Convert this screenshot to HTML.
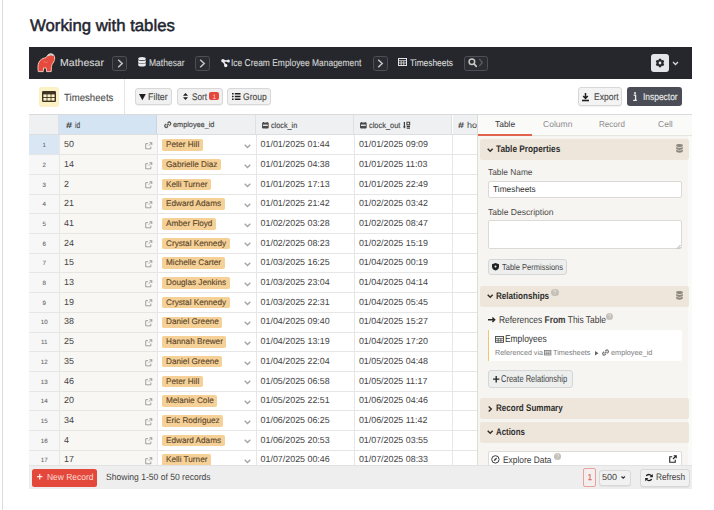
<!DOCTYPE html>
<html><head><meta charset="utf-8">
<style>
*{margin:0;padding:0;box-sizing:border-box}
html,body{width:714px;height:510px;overflow:hidden;background:#fff}
body{font-family:"Liberation Sans",sans-serif;position:relative;text-rendering:geometricPrecision}
.a{position:absolute}
.t{position:absolute;white-space:nowrap}
svg.a{overflow:visible}
</style></head><body>
<div class="a" style="left:2.00px;top:0.00px;width:1.00px;height:510.00px;background:#dcdcdc"></div>
<div class="t" style="left:29.60px;top:16px;font-size:16.7px;line-height:20px;color:#1f2530;-webkit-text-stroke:0.5px #1f2530;transform:scaleX(1.003);transform-origin:0 0;">Working with tables</div>
<div class="a" style="left:29.00px;top:47.00px;width:663.00px;height:31.50px;background:#25272c"></div>
<svg class="a" style="left:34.00px;top:51.00px;" width="24" height="24" viewBox="0 0 24 24"><path d="M4.3 20.6C3.9 18 3.8 15.4 4.3 13.2C4.9 10.5 6.6 8.4 9 7.5C10.3 7 11.6 6.8 12.6 6.2C13.1 4.5 14.5 3 16.6 2.9C19 2.8 20.7 4.6 20.7 7C20.7 9 20 10.6 19 12C18.2 13.1 17.6 14.2 17.4 15.6L17.2 20.6L12.6 20.6L12.2 16.9C11.4 17.1 10.4 17.1 9.6 16.9L9.2 20.6Z" fill="#e54b3c" stroke="#f2c4bb" stroke-width="1" stroke-linejoin="round"/><path d="M14.6 4.2C15.6 3.4 17.6 3.2 18.8 4" stroke="#d6d2cc" stroke-width="1.8" fill="none" stroke-linecap="round"/><path d="M9.5 10.2C10.8 11.4 12.2 11.6 13.6 11.2" stroke="#f38d7f" stroke-width="0.7" fill="none"/></svg>
<div class="t" style="left:59.80px;top:54px;font-size:10.2px;line-height:20px;color:#d9d9d9;-webkit-text-stroke:0.1px #d9d9d9;transform:scaleX(1.034);transform-origin:0 0;">Mathesar</div>
<div class="a" style="left:112.30px;top:56.20px;width:14.70px;height:14.50px;background:#2a2c31;border:1px solid #4c4f56;border-radius:2.5px"></div>
<svg class="a" style="left:116.50px;top:58.60px;" width="7" height="9" viewBox="0 0 7 9"><path d="M1.2 0.8l4 3.7-4 3.7" fill="none" stroke="#c4c4c4" stroke-width="1.5"/></svg>
<svg class="a" style="left:137.80px;top:57.40px;" width="8" height="9.6" viewBox="0 0 8 9.6"><ellipse cx="4" cy="1.7" rx="3.8" ry="1.6" fill="#ececec"/><path d="M0.2 2.9v2c0 .9 1.7 1.6 3.8 1.6s3.8-.7 3.8-1.6v-2c-.8.7-2.2 1.1-3.8 1.1S1 3.6.2 2.9zM0.2 5.9v2c0 .9 1.7 1.6 3.8 1.6s3.8-.7 3.8-1.6v-2c-.8.7-2.2 1.1-3.8 1.1S1 6.6.2 5.9z" fill="#ececec"/></svg>
<div class="t" style="left:148.50px;top:54px;font-size:9.9px;line-height:20px;color:#d9d9d9;-webkit-text-stroke:0.1px #d9d9d9;transform:scaleX(0.862);transform-origin:0 0;">Mathesar</div>
<div class="a" style="left:195.20px;top:56.20px;width:14.70px;height:14.50px;background:#2a2c31;border:1px solid #4c4f56;border-radius:2.5px"></div>
<svg class="a" style="left:199.40px;top:58.60px;" width="7" height="9" viewBox="0 0 7 9"><path d="M1.2 0.8l4 3.7-4 3.7" fill="none" stroke="#c4c4c4" stroke-width="1.5"/></svg>
<svg class="a" style="left:220.60px;top:58.50px;" width="9" height="8.5" viewBox="0 0 9 8.5"><path d="M2 1.8L7.3 2M2 1.8L4.6 6.4" stroke="#ececec" stroke-width="1.5"/><circle cx="2" cy="1.8" r="1.8" fill="#ececec"/><circle cx="7.4" cy="2" r="1.5" fill="#ececec"/><circle cx="4.7" cy="6.5" r="1.7" fill="#ececec"/></svg>
<div class="t" style="left:230.80px;top:54px;font-size:9.9px;line-height:20px;color:#d9d9d9;-webkit-text-stroke:0.1px #d9d9d9;transform:scaleX(0.854);transform-origin:0 0;">Ice Cream Employee Management</div>
<div class="a" style="left:373.20px;top:56.20px;width:14.70px;height:14.50px;background:#2a2c31;border:1px solid #4c4f56;border-radius:2.5px"></div>
<svg class="a" style="left:377.40px;top:58.60px;" width="7" height="9" viewBox="0 0 7 9"><path d="M1.2 0.8l4 3.7-4 3.7" fill="none" stroke="#c4c4c4" stroke-width="1.5"/></svg>
<svg class="a" style="left:397.80px;top:58.20px;" width="9" height="8" viewBox="0 0 9 8"><rect x="0.5" y="0.5" width="8" height="7" fill="none" stroke="#e4e4e4" stroke-width="1"/><path d="M0.5 2.7h8M0.5 5h8M3.2 2.7v4.8M5.8 2.7v4.8" stroke="#e4e4e4" stroke-width="0.8"/></svg>
<div class="t" style="left:410.10px;top:54px;font-size:9.5px;line-height:20px;color:#dcdcdc;-webkit-text-stroke:0.1px #dcdcdc;transform:scaleX(0.880);transform-origin:0 0;">Timesheets</div>
<div class="a" style="left:464.20px;top:56.00px;width:23.60px;height:14.50px;background:#2a2c31;border:1px solid #4c4f56;border-radius:2.5px"></div>
<svg class="a" style="left:467.60px;top:58.40px;" width="18" height="9" viewBox="0 0 18 9"><circle cx="3.9" cy="3.7" r="2.8" fill="none" stroke="#c8c8c8" stroke-width="1.5"/><path d="M5.9 5.8l2.4 2.5" stroke="#c8c8c8" stroke-width="1.7" stroke-linecap="round"/><path d="M11.2 0.9l3.2 3.6-3.2 3.6" fill="none" stroke="#5a5d63" stroke-width="1.3"/></svg>
<div class="a" style="left:651.30px;top:54.40px;width:17.30px;height:17.40px;background:#e4e5e8;border-radius:3px"></div>
<svg class="a" style="left:655.20px;top:58.20px;" width="10" height="10" viewBox="0 0 10 10"><path d="M3.40 2.23 L4.01 0.71 L5.99 0.71 L6.60 2.23 L8.22 2.00 L9.21 3.71 L8.20 5.00 L9.21 6.29 L8.22 8.00 L6.60 7.77 L5.99 9.29 L4.01 9.29 L3.40 7.77 L1.78 8.00 L0.79 6.29 L1.80 5.00 L0.79 3.71 L1.78 2.00Z" fill="#25262a"/><circle cx="5" cy="5" r="1.4" fill="#e6e6e8"/></svg>
<svg class="a" style="left:672.00px;top:61.00px;" width="7" height="5" viewBox="0 0 7 5"><path d="M1 1l2.5 2.5L6 1" fill="none" stroke="#d8d8d8" stroke-width="1.3"/></svg>
<div class="a" style="left:29.00px;top:78.50px;width:663.00px;height:35.50px;background:#fff"></div>
<div class="a" style="left:38.90px;top:86.50px;width:20.30px;height:20.10px;background:#fcf0c5;border-radius:3px"></div>
<svg class="a" style="left:41.70px;top:91.20px;" width="14" height="11" viewBox="0 0 14 11"><rect x="0" y="0" width="14" height="11" rx="1.2" fill="#3e3424"/><rect x="1.4" y="3.4" width="3.2" height="2.6" fill="#fcf0c5"/><rect x="5.4" y="3.4" width="3.2" height="2.6" fill="#fcf0c5"/><rect x="9.4" y="3.4" width="3.2" height="2.6" fill="#fcf0c5"/><rect x="1.4" y="6.9" width="3.2" height="2.7" fill="#fcf0c5"/><rect x="5.4" y="6.9" width="3.2" height="2.7" fill="#fcf0c5"/><rect x="9.4" y="6.9" width="3.2" height="2.7" fill="#fcf0c5"/></svg>
<div class="t" style="left:64.40px;top:89px;font-size:10.3px;line-height:20px;color:#4a4a4a;-webkit-text-stroke:0.1px #4a4a4a;transform:scaleX(0.935);transform-origin:0 0;">Timesheets</div>
<div class="a" style="left:124.10px;top:79.00px;width:1.00px;height:35.00px;background:#e4e4e4"></div>
<div class="a" style="left:134.60px;top:87.50px;width:37.80px;height:17.80px;background:#f1f1f1;border:1px solid #d8d8d8;border-radius:3px;box-shadow:0 1px 0 rgba(0,0,0,.05)"></div>
<svg class="a" style="left:138.80px;top:94.00px;" width="6.8" height="6.2" viewBox="0 0 6.8 6.2"><path d="M0 0h6.8L3.4 6.2z" fill="#1e1e1e"/></svg>
<div class="t" style="left:148.00px;top:88px;font-size:9.7px;line-height:20px;color:#4a4a4a;-webkit-text-stroke:0.12px #4a4a4a;transform:scaleX(0.919);transform-origin:0 0;">Filter</div>
<div class="a" style="left:177.10px;top:87.50px;width:45.50px;height:17.80px;background:#f1f1f1;border:1px solid #d8d8d8;border-radius:3px;box-shadow:0 1px 0 rgba(0,0,0,.05)"></div>
<svg class="a" style="left:182.70px;top:93.30px;" width="5" height="7" viewBox="0 0 5 7"><path d="M2.5 0L5 2.8H0zM2.5 7L5 4.2H0z" fill="#1e1e1e"/></svg>
<div class="t" style="left:192.10px;top:88px;font-size:9.7px;line-height:20px;color:#4a4a4a;-webkit-text-stroke:0.12px #4a4a4a;transform:scaleX(0.848);transform-origin:0 0;">Sort</div>
<div class="a" style="left:209.30px;top:91.70px;width:9.40px;height:8.70px;background:#e5483b;border-radius:2px"></div>
<div class="t" style="left:212.40px;top:88px;font-size:6.5px;line-height:20px;color:#ffd9d4;">1</div>
<div class="a" style="left:227.10px;top:87.50px;width:43.90px;height:17.80px;background:#f1f1f1;border:1px solid #d8d8d8;border-radius:3px;box-shadow:0 1px 0 rgba(0,0,0,.05)"></div>
<svg class="a" style="left:231.70px;top:93.10px;" width="8.5" height="7" viewBox="0 0 8.5 7"><path d="M0 0.8h1.6M0 3.5h1.6M0 6.2h1.6M2.8 0.8h5.7M2.8 3.5h5.7M2.8 6.2h5.7" stroke="#1e1e1e" stroke-width="1.4"/></svg>
<div class="t" style="left:242.90px;top:88px;font-size:9.7px;line-height:20px;color:#4a4a4a;-webkit-text-stroke:0.12px #4a4a4a;transform:scaleX(0.883);transform-origin:0 0;">Group</div>
<div class="a" style="left:578.10px;top:87.30px;width:43.90px;height:18.50px;background:#f3f3f3;border:1px solid #d8d8d8;border-radius:3px;box-shadow:0 1px 0 rgba(0,0,0,.05)"></div>
<svg class="a" style="left:582.40px;top:92.70px;" width="7" height="8.5" viewBox="0 0 7 8.5"><path d="M3.5 0v5.2M1.2 3l2.3 2.4L5.8 3" fill="none" stroke="#1e1e1e" stroke-width="1.5"/><path d="M0 7.5h7" stroke="#1e1e1e" stroke-width="1.6"/></svg>
<div class="t" style="left:593.50px;top:88px;font-size:9.7px;line-height:20px;color:#4a4a4a;-webkit-text-stroke:0.12px #4a4a4a;transform:scaleX(0.878);transform-origin:0 0;">Export</div>
<div class="a" style="left:626.60px;top:87.30px;width:55.50px;height:18.50px;background:#4a4d55;border-radius:3px"></div>
<svg class="a" style="left:633.00px;top:92.30px;" width="4" height="9" viewBox="0 0 4 9"><circle cx="2" cy="1" r="1" fill="#f0f0f0"/><path d="M0.6 3.2h2v5M0.2 8.3h3.6" fill="none" stroke="#f0f0f0" stroke-width="1.3"/></svg>
<div class="t" style="left:642.80px;top:88px;font-size:9.7px;line-height:20px;color:#eeeeee;-webkit-text-stroke:0.12px #eeeeee;transform:scaleX(0.869);transform-origin:0 0;">Inspector</div>
<div class="a" style="left:29.00px;top:115.00px;width:448.50px;height:350.00px;background:#fff"></div>
<div class="a" style="left:29.00px;top:115.00px;width:30.00px;height:20.00px;background:#eef0f1;border-right:1px solid #dfe0e1"></div>
<div class="a" style="left:59.00px;top:115.00px;width:98.00px;height:20.00px;background:#d4e4f2;border-right:1px solid #c9d6e2"></div>
<div class="a" style="left:157.00px;top:115.00px;width:99.00px;height:20.00px;background:#eef0f1;border-right:1px solid #dfe0e1"></div>
<div class="a" style="left:256.00px;top:115.00px;width:98.30px;height:20.00px;background:#eef0f1;border-right:1px solid #dfe0e1"></div>
<div class="a" style="left:354.30px;top:115.00px;width:98.20px;height:20.00px;background:#eef0f1;border-right:1px solid #dfe0e1"></div>
<div class="a" style="left:452.50px;top:115.00px;width:25.00px;height:20.00px;background:#eef0f1"></div>
<div class="a" style="left:29.00px;top:134.30px;width:448.50px;height:0.90px;background:#dcdedf"></div>
<div class="t" style="left:65.50px;top:115px;font-size:8.6px;line-height:20px;color:#474747;font-weight:bold;transform:scaleX(1.278);transform-origin:0 0;">#</div>
<div class="t" style="left:75.10px;top:115px;font-size:8.6px;line-height:20px;color:#474747;-webkit-text-stroke:0.15px #474747;transform:scaleX(0.760);transform-origin:0 0;">id</div>
<svg class="a" style="left:163.60px;top:122.10px;" width="7.5" height="5.5" viewBox="0 0 7.5 5.5"><path d="M3.4 1.2L4.1 0.6a1.5 1.5 0 0 1 2.3 2L5.3 3.6M4.1 4.3L3.4 4.9a1.5 1.5 0 0 1-2.3-2L2.2 1.9M2.7 3.6L4.8 1.9" fill="none" stroke="#555" stroke-width="1.25"/></svg>
<div class="t" style="left:172.60px;top:115px;font-size:7.6px;line-height:20px;color:#474747;-webkit-text-stroke:0.15px #474747;transform:scaleX(0.961);transform-origin:0 0;">employee_id</div>
<svg class="a" style="left:261.90px;top:121.60px;" width="6.7" height="6.4" viewBox="0 0 6.7 6.4"><rect x="0" y="0.6" width="6.7" height="5.8" rx="0.8" fill="#4a4a4a"/><rect x="1" y="0" width="1" height="1.2" fill="#4a4a4a"/><rect x="4.7" y="0" width="1" height="1.2" fill="#4a4a4a"/><rect x="0.9" y="2.6" width="4.9" height="1.3" fill="#eef0f1"/></svg>
<div class="t" style="left:271.00px;top:116px;font-size:8.0px;line-height:20px;color:#474747;-webkit-text-stroke:0.15px #474747;transform:scaleX(0.906);transform-origin:0 0;">clock_in</div>
<svg class="a" style="left:359.90px;top:121.60px;" width="6.7" height="6.4" viewBox="0 0 6.7 6.4"><rect x="0" y="0.6" width="6.7" height="5.8" rx="0.8" fill="#4a4a4a"/><rect x="1" y="0" width="1" height="1.2" fill="#4a4a4a"/><rect x="4.7" y="0" width="1" height="1.2" fill="#4a4a4a"/><rect x="0.9" y="2.6" width="4.9" height="1.3" fill="#eef0f1"/></svg>
<div class="t" style="left:368.70px;top:116px;font-size:8.0px;line-height:20px;color:#474747;-webkit-text-stroke:0.15px #474747;transform:scaleX(0.929);transform-origin:0 0;">clock_out</div>
<svg class="a" style="left:402.50px;top:121.60px;" width="7.2" height="6.6" viewBox="0 0 7.2 6.6"><path d="M1.4 0v5.6" stroke="#3e3e3e" stroke-width="1.2"/><path d="M0 4.4l1.4 2.2 1.4-2.2z" fill="#3e3e3e"/><rect x="3.9" y="0.2" width="2.8" height="2.6" fill="none" stroke="#3e3e3e" stroke-width="1"/><path d="M3.7 4.4h3.3M3.7 6.1h3.3" stroke="#3e3e3e" stroke-width="1.1"/></svg>
<div class="t" style="left:458.00px;top:115px;font-size:8.6px;line-height:20px;color:#474747;font-weight:bold;transform:scaleX(1.257);transform-origin:0 0;">#</div>
<div class="t" style="left:466.50px;top:115px;font-size:8.6px;line-height:20px;color:#474747;transform:scaleX(1.047);transform-origin:0 0;clip-path:inset(0 44% 0 0);">hours</div>
<div class="a" style="left:29.00px;top:135.10px;width:30.00px;height:329.90px;background:#f7f7f7"></div>
<div class="a" style="left:59.00px;top:135.10px;width:98.00px;height:329.90px;background:#f8f7f4"></div>
<div class="a" style="left:29.00px;top:135.10px;width:30.00px;height:19.70px;background:#d9e7f4"></div>
<div class="t" style="left:42.48px;top:136px;font-size:6.2px;line-height:20px;color:#6a6a6a;-webkit-text-stroke:0.1px #6a6a6a;">1</div>
<div class="t" style="left:64.00px;top:134px;font-size:8.9px;line-height:20px;color:#444;">50</div>
<svg class="a" style="left:145.00px;top:141.80px;" width="7.5" height="7.5" viewBox="0 0 16 16"><path d="M9.5 1.5h5v5M14.5 1.5L8 8M12.5 9.5v5h-11v-11h5" fill="none" stroke="#8c8c8c" stroke-width="1.7"/></svg>
<div class="a" style="left:162.20px;top:139.20px;width:40.55px;height:11.50px;background:#f6d197;border-radius:1.8px"></div>
<div class="t" style="left:166.00px;top:135px;font-size:8.2px;line-height:20px;color:#5a462b;-webkit-text-stroke:0.12px #5a462b;">Peter Hill</div>
<svg class="a" style="left:243.70px;top:143.80px;" width="7" height="4.5" viewBox="0 0 7 4.5"><path d="M0.7 0.7l2.8 2.8 2.8-2.8" fill="none" stroke="#a3a3a3" stroke-width="1.3"/></svg>
<div class="t" style="left:260.60px;top:134px;font-size:8.9px;line-height:20px;color:#444;">01/01/2025 01:44</div>
<div class="t" style="left:358.90px;top:134px;font-size:8.9px;line-height:20px;color:#444;">01/01/2025 09:09</div>
<div class="a" style="left:29.00px;top:154.20px;width:448.50px;height:1.10px;background:#e6e6e6"></div>
<div class="t" style="left:42.48px;top:156px;font-size:6.2px;line-height:20px;color:#6a6a6a;-webkit-text-stroke:0.1px #6a6a6a;">2</div>
<div class="t" style="left:64.00px;top:154px;font-size:8.9px;line-height:20px;color:#444;">14</div>
<svg class="a" style="left:145.00px;top:161.50px;" width="7.5" height="7.5" viewBox="0 0 16 16"><path d="M9.5 1.5h5v5M14.5 1.5L8 8M12.5 9.5v5h-11v-11h5" fill="none" stroke="#8c8c8c" stroke-width="1.7"/></svg>
<div class="a" style="left:162.20px;top:158.90px;width:58.80px;height:11.50px;background:#f6d197;border-radius:1.8px"></div>
<div class="t" style="left:166.00px;top:155px;font-size:8.2px;line-height:20px;color:#5a462b;-webkit-text-stroke:0.12px #5a462b;">Gabrielle Diaz</div>
<svg class="a" style="left:243.70px;top:163.50px;" width="7" height="4.5" viewBox="0 0 7 4.5"><path d="M0.7 0.7l2.8 2.8 2.8-2.8" fill="none" stroke="#a3a3a3" stroke-width="1.3"/></svg>
<div class="t" style="left:260.60px;top:154px;font-size:8.9px;line-height:20px;color:#444;">01/01/2025 04:38</div>
<div class="t" style="left:358.90px;top:154px;font-size:8.9px;line-height:20px;color:#444;">01/01/2025 11:03</div>
<div class="a" style="left:29.00px;top:173.90px;width:448.50px;height:1.10px;background:#e6e6e6"></div>
<div class="t" style="left:42.48px;top:176px;font-size:6.2px;line-height:20px;color:#6a6a6a;-webkit-text-stroke:0.1px #6a6a6a;">3</div>
<div class="t" style="left:64.00px;top:174px;font-size:8.9px;line-height:20px;color:#444;">2</div>
<svg class="a" style="left:145.00px;top:181.20px;" width="7.5" height="7.5" viewBox="0 0 16 16"><path d="M9.5 1.5h5v5M14.5 1.5L8 8M12.5 9.5v5h-11v-11h5" fill="none" stroke="#8c8c8c" stroke-width="1.7"/></svg>
<div class="a" style="left:162.20px;top:178.60px;width:48.79px;height:11.50px;background:#f6d197;border-radius:1.8px"></div>
<div class="t" style="left:166.00px;top:175px;font-size:8.2px;line-height:20px;color:#5a462b;-webkit-text-stroke:0.12px #5a462b;">Kelli Turner</div>
<svg class="a" style="left:243.70px;top:183.20px;" width="7" height="4.5" viewBox="0 0 7 4.5"><path d="M0.7 0.7l2.8 2.8 2.8-2.8" fill="none" stroke="#a3a3a3" stroke-width="1.3"/></svg>
<div class="t" style="left:260.60px;top:174px;font-size:8.9px;line-height:20px;color:#444;">01/01/2025 17:13</div>
<div class="t" style="left:358.90px;top:174px;font-size:8.9px;line-height:20px;color:#444;">01/01/2025 22:49</div>
<div class="a" style="left:29.00px;top:193.60px;width:448.50px;height:1.10px;background:#e6e6e6"></div>
<div class="t" style="left:42.48px;top:195px;font-size:6.2px;line-height:20px;color:#6a6a6a;-webkit-text-stroke:0.1px #6a6a6a;">4</div>
<div class="t" style="left:64.00px;top:193px;font-size:8.9px;line-height:20px;color:#444;">21</div>
<svg class="a" style="left:145.00px;top:200.90px;" width="7.5" height="7.5" viewBox="0 0 16 16"><path d="M9.5 1.5h5v5M14.5 1.5L8 8M12.5 9.5v5h-11v-11h5" fill="none" stroke="#8c8c8c" stroke-width="1.7"/></svg>
<div class="a" style="left:162.20px;top:198.30px;width:62.44px;height:11.50px;background:#f6d197;border-radius:1.8px"></div>
<div class="t" style="left:166.00px;top:194px;font-size:8.2px;line-height:20px;color:#5a462b;-webkit-text-stroke:0.12px #5a462b;">Edward Adams</div>
<svg class="a" style="left:243.70px;top:202.90px;" width="7" height="4.5" viewBox="0 0 7 4.5"><path d="M0.7 0.7l2.8 2.8 2.8-2.8" fill="none" stroke="#a3a3a3" stroke-width="1.3"/></svg>
<div class="t" style="left:260.60px;top:193px;font-size:8.9px;line-height:20px;color:#444;">01/01/2025 21:42</div>
<div class="t" style="left:358.90px;top:193px;font-size:8.9px;line-height:20px;color:#444;">01/02/2025 03:42</div>
<div class="a" style="left:29.00px;top:213.30px;width:448.50px;height:1.10px;background:#e6e6e6"></div>
<div class="t" style="left:42.48px;top:215px;font-size:6.2px;line-height:20px;color:#6a6a6a;-webkit-text-stroke:0.1px #6a6a6a;">5</div>
<div class="t" style="left:64.00px;top:213px;font-size:8.9px;line-height:20px;color:#444;">41</div>
<svg class="a" style="left:145.00px;top:220.60px;" width="7.5" height="7.5" viewBox="0 0 16 16"><path d="M9.5 1.5h5v5M14.5 1.5L8 8M12.5 9.5v5h-11v-11h5" fill="none" stroke="#8c8c8c" stroke-width="1.7"/></svg>
<div class="a" style="left:162.20px;top:218.00px;width:53.79px;height:11.50px;background:#f6d197;border-radius:1.8px"></div>
<div class="t" style="left:166.00px;top:214px;font-size:8.2px;line-height:20px;color:#5a462b;-webkit-text-stroke:0.12px #5a462b;">Amber Floyd</div>
<svg class="a" style="left:243.70px;top:222.60px;" width="7" height="4.5" viewBox="0 0 7 4.5"><path d="M0.7 0.7l2.8 2.8 2.8-2.8" fill="none" stroke="#a3a3a3" stroke-width="1.3"/></svg>
<div class="t" style="left:260.60px;top:213px;font-size:8.9px;line-height:20px;color:#444;">01/02/2025 03:28</div>
<div class="t" style="left:358.90px;top:213px;font-size:8.9px;line-height:20px;color:#444;">01/02/2025 08:47</div>
<div class="a" style="left:29.00px;top:233.00px;width:448.50px;height:1.10px;background:#e6e6e6"></div>
<div class="t" style="left:42.48px;top:235px;font-size:6.2px;line-height:20px;color:#6a6a6a;-webkit-text-stroke:0.1px #6a6a6a;">6</div>
<div class="t" style="left:64.00px;top:233px;font-size:8.9px;line-height:20px;color:#444;">24</div>
<svg class="a" style="left:145.00px;top:240.30px;" width="7.5" height="7.5" viewBox="0 0 16 16"><path d="M9.5 1.5h5v5M14.5 1.5L8 8M12.5 9.5v5h-11v-11h5" fill="none" stroke="#8c8c8c" stroke-width="1.7"/></svg>
<div class="a" style="left:162.20px;top:237.70px;width:67.45px;height:11.50px;background:#f6d197;border-radius:1.8px"></div>
<div class="t" style="left:166.00px;top:234px;font-size:8.2px;line-height:20px;color:#5a462b;-webkit-text-stroke:0.12px #5a462b;">Crystal Kennedy</div>
<svg class="a" style="left:243.70px;top:242.30px;" width="7" height="4.5" viewBox="0 0 7 4.5"><path d="M0.7 0.7l2.8 2.8 2.8-2.8" fill="none" stroke="#a3a3a3" stroke-width="1.3"/></svg>
<div class="t" style="left:260.60px;top:233px;font-size:8.9px;line-height:20px;color:#444;">01/02/2025 08:23</div>
<div class="t" style="left:358.90px;top:233px;font-size:8.9px;line-height:20px;color:#444;">01/02/2025 15:19</div>
<div class="a" style="left:29.00px;top:252.70px;width:448.50px;height:1.10px;background:#e6e6e6"></div>
<div class="t" style="left:42.48px;top:254px;font-size:6.2px;line-height:20px;color:#6a6a6a;-webkit-text-stroke:0.1px #6a6a6a;">7</div>
<div class="t" style="left:64.00px;top:252px;font-size:8.9px;line-height:20px;color:#444;">15</div>
<svg class="a" style="left:145.00px;top:260.00px;" width="7.5" height="7.5" viewBox="0 0 16 16"><path d="M9.5 1.5h5v5M14.5 1.5L8 8M12.5 9.5v5h-11v-11h5" fill="none" stroke="#8c8c8c" stroke-width="1.7"/></svg>
<div class="a" style="left:162.20px;top:257.40px;width:62.44px;height:11.50px;background:#f6d197;border-radius:1.8px"></div>
<div class="t" style="left:166.00px;top:253px;font-size:8.2px;line-height:20px;color:#5a462b;-webkit-text-stroke:0.12px #5a462b;">Michelle Carter</div>
<svg class="a" style="left:243.70px;top:262.00px;" width="7" height="4.5" viewBox="0 0 7 4.5"><path d="M0.7 0.7l2.8 2.8 2.8-2.8" fill="none" stroke="#a3a3a3" stroke-width="1.3"/></svg>
<div class="t" style="left:260.60px;top:252px;font-size:8.9px;line-height:20px;color:#444;">01/03/2025 16:25</div>
<div class="t" style="left:358.90px;top:252px;font-size:8.9px;line-height:20px;color:#444;">01/04/2025 00:19</div>
<div class="a" style="left:29.00px;top:272.40px;width:448.50px;height:1.10px;background:#e6e6e6"></div>
<div class="t" style="left:42.48px;top:274px;font-size:6.2px;line-height:20px;color:#6a6a6a;-webkit-text-stroke:0.1px #6a6a6a;">8</div>
<div class="t" style="left:64.00px;top:272px;font-size:8.9px;line-height:20px;color:#444;">13</div>
<svg class="a" style="left:145.00px;top:279.70px;" width="7.5" height="7.5" viewBox="0 0 16 16"><path d="M9.5 1.5h5v5M14.5 1.5L8 8M12.5 9.5v5h-11v-11h5" fill="none" stroke="#8c8c8c" stroke-width="1.7"/></svg>
<div class="a" style="left:162.20px;top:277.10px;width:67.49px;height:11.50px;background:#f6d197;border-radius:1.8px"></div>
<div class="t" style="left:166.00px;top:273px;font-size:8.2px;line-height:20px;color:#5a462b;-webkit-text-stroke:0.12px #5a462b;">Douglas Jenkins</div>
<svg class="a" style="left:243.70px;top:281.70px;" width="7" height="4.5" viewBox="0 0 7 4.5"><path d="M0.7 0.7l2.8 2.8 2.8-2.8" fill="none" stroke="#a3a3a3" stroke-width="1.3"/></svg>
<div class="t" style="left:260.60px;top:272px;font-size:8.9px;line-height:20px;color:#444;">01/03/2025 23:04</div>
<div class="t" style="left:358.90px;top:272px;font-size:8.9px;line-height:20px;color:#444;">01/04/2025 04:14</div>
<div class="a" style="left:29.00px;top:292.10px;width:448.50px;height:1.10px;background:#e6e6e6"></div>
<div class="t" style="left:42.48px;top:294px;font-size:6.2px;line-height:20px;color:#6a6a6a;-webkit-text-stroke:0.1px #6a6a6a;">9</div>
<div class="t" style="left:64.00px;top:292px;font-size:8.9px;line-height:20px;color:#444;">19</div>
<svg class="a" style="left:145.00px;top:299.40px;" width="7.5" height="7.5" viewBox="0 0 16 16"><path d="M9.5 1.5h5v5M14.5 1.5L8 8M12.5 9.5v5h-11v-11h5" fill="none" stroke="#8c8c8c" stroke-width="1.7"/></svg>
<div class="a" style="left:162.20px;top:296.80px;width:67.45px;height:11.50px;background:#f6d197;border-radius:1.8px"></div>
<div class="t" style="left:166.00px;top:293px;font-size:8.2px;line-height:20px;color:#5a462b;-webkit-text-stroke:0.12px #5a462b;">Crystal Kennedy</div>
<svg class="a" style="left:243.70px;top:301.40px;" width="7" height="4.5" viewBox="0 0 7 4.5"><path d="M0.7 0.7l2.8 2.8 2.8-2.8" fill="none" stroke="#a3a3a3" stroke-width="1.3"/></svg>
<div class="t" style="left:260.60px;top:292px;font-size:8.9px;line-height:20px;color:#444;">01/03/2025 22:31</div>
<div class="t" style="left:358.90px;top:292px;font-size:8.9px;line-height:20px;color:#444;">01/04/2025 05:45</div>
<div class="a" style="left:29.00px;top:311.80px;width:448.50px;height:1.10px;background:#e6e6e6"></div>
<div class="t" style="left:40.76px;top:313px;font-size:6.2px;line-height:20px;color:#6a6a6a;-webkit-text-stroke:0.1px #6a6a6a;">10</div>
<div class="t" style="left:64.00px;top:311px;font-size:8.9px;line-height:20px;color:#444;">38</div>
<svg class="a" style="left:145.00px;top:319.10px;" width="7.5" height="7.5" viewBox="0 0 16 16"><path d="M9.5 1.5h5v5M14.5 1.5L8 8M12.5 9.5v5h-11v-11h5" fill="none" stroke="#8c8c8c" stroke-width="1.7"/></svg>
<div class="a" style="left:162.20px;top:316.50px;width:60.19px;height:11.50px;background:#f6d197;border-radius:1.8px"></div>
<div class="t" style="left:166.00px;top:312px;font-size:8.2px;line-height:20px;color:#5a462b;-webkit-text-stroke:0.12px #5a462b;">Daniel Greene</div>
<svg class="a" style="left:243.70px;top:321.10px;" width="7" height="4.5" viewBox="0 0 7 4.5"><path d="M0.7 0.7l2.8 2.8 2.8-2.8" fill="none" stroke="#a3a3a3" stroke-width="1.3"/></svg>
<div class="t" style="left:260.60px;top:311px;font-size:8.9px;line-height:20px;color:#444;">01/04/2025 09:40</div>
<div class="t" style="left:358.90px;top:311px;font-size:8.9px;line-height:20px;color:#444;">01/04/2025 15:27</div>
<div class="a" style="left:29.00px;top:331.50px;width:448.50px;height:1.10px;background:#e6e6e6"></div>
<div class="t" style="left:40.98px;top:333px;font-size:6.2px;line-height:20px;color:#6a6a6a;-webkit-text-stroke:0.1px #6a6a6a;">11</div>
<div class="t" style="left:64.00px;top:331px;font-size:8.9px;line-height:20px;color:#444;">25</div>
<svg class="a" style="left:145.00px;top:338.80px;" width="7.5" height="7.5" viewBox="0 0 16 16"><path d="M9.5 1.5h5v5M14.5 1.5L8 8M12.5 9.5v5h-11v-11h5" fill="none" stroke="#8c8c8c" stroke-width="1.7"/></svg>
<div class="a" style="left:162.20px;top:336.20px;width:64.29px;height:11.50px;background:#f6d197;border-radius:1.8px"></div>
<div class="t" style="left:166.00px;top:332px;font-size:8.2px;line-height:20px;color:#5a462b;-webkit-text-stroke:0.12px #5a462b;">Hannah Brewer</div>
<svg class="a" style="left:243.70px;top:340.80px;" width="7" height="4.5" viewBox="0 0 7 4.5"><path d="M0.7 0.7l2.8 2.8 2.8-2.8" fill="none" stroke="#a3a3a3" stroke-width="1.3"/></svg>
<div class="t" style="left:260.60px;top:331px;font-size:8.9px;line-height:20px;color:#444;">01/04/2025 13:19</div>
<div class="t" style="left:358.90px;top:331px;font-size:8.9px;line-height:20px;color:#444;">01/04/2025 17:20</div>
<div class="a" style="left:29.00px;top:351.20px;width:448.50px;height:1.10px;background:#e6e6e6"></div>
<div class="t" style="left:40.76px;top:353px;font-size:6.2px;line-height:20px;color:#6a6a6a;-webkit-text-stroke:0.1px #6a6a6a;">12</div>
<div class="t" style="left:64.00px;top:351px;font-size:8.9px;line-height:20px;color:#444;">35</div>
<svg class="a" style="left:145.00px;top:358.50px;" width="7.5" height="7.5" viewBox="0 0 16 16"><path d="M9.5 1.5h5v5M14.5 1.5L8 8M12.5 9.5v5h-11v-11h5" fill="none" stroke="#8c8c8c" stroke-width="1.7"/></svg>
<div class="a" style="left:162.20px;top:355.90px;width:60.19px;height:11.50px;background:#f6d197;border-radius:1.8px"></div>
<div class="t" style="left:166.00px;top:352px;font-size:8.2px;line-height:20px;color:#5a462b;-webkit-text-stroke:0.12px #5a462b;">Daniel Greene</div>
<svg class="a" style="left:243.70px;top:360.50px;" width="7" height="4.5" viewBox="0 0 7 4.5"><path d="M0.7 0.7l2.8 2.8 2.8-2.8" fill="none" stroke="#a3a3a3" stroke-width="1.3"/></svg>
<div class="t" style="left:260.60px;top:351px;font-size:8.9px;line-height:20px;color:#444;">01/04/2025 22:04</div>
<div class="t" style="left:358.90px;top:351px;font-size:8.9px;line-height:20px;color:#444;">01/05/2025 04:48</div>
<div class="a" style="left:29.00px;top:370.90px;width:448.50px;height:1.10px;background:#e6e6e6"></div>
<div class="t" style="left:40.76px;top:373px;font-size:6.2px;line-height:20px;color:#6a6a6a;-webkit-text-stroke:0.1px #6a6a6a;">13</div>
<div class="t" style="left:64.00px;top:371px;font-size:8.9px;line-height:20px;color:#444;">46</div>
<svg class="a" style="left:145.00px;top:378.20px;" width="7.5" height="7.5" viewBox="0 0 16 16"><path d="M9.5 1.5h5v5M14.5 1.5L8 8M12.5 9.5v5h-11v-11h5" fill="none" stroke="#8c8c8c" stroke-width="1.7"/></svg>
<div class="a" style="left:162.20px;top:375.60px;width:40.55px;height:11.50px;background:#f6d197;border-radius:1.8px"></div>
<div class="t" style="left:166.00px;top:372px;font-size:8.2px;line-height:20px;color:#5a462b;-webkit-text-stroke:0.12px #5a462b;">Peter Hill</div>
<svg class="a" style="left:243.70px;top:380.20px;" width="7" height="4.5" viewBox="0 0 7 4.5"><path d="M0.7 0.7l2.8 2.8 2.8-2.8" fill="none" stroke="#a3a3a3" stroke-width="1.3"/></svg>
<div class="t" style="left:260.60px;top:371px;font-size:8.9px;line-height:20px;color:#444;">01/05/2025 06:58</div>
<div class="t" style="left:358.90px;top:371px;font-size:8.9px;line-height:20px;color:#444;">01/05/2025 11:17</div>
<div class="a" style="left:29.00px;top:390.60px;width:448.50px;height:1.10px;background:#e6e6e6"></div>
<div class="t" style="left:40.76px;top:392px;font-size:6.2px;line-height:20px;color:#6a6a6a;-webkit-text-stroke:0.1px #6a6a6a;">14</div>
<div class="t" style="left:64.00px;top:390px;font-size:8.9px;line-height:20px;color:#444;">20</div>
<svg class="a" style="left:145.00px;top:397.90px;" width="7.5" height="7.5" viewBox="0 0 16 16"><path d="M9.5 1.5h5v5M14.5 1.5L8 8M12.5 9.5v5h-11v-11h5" fill="none" stroke="#8c8c8c" stroke-width="1.7"/></svg>
<div class="a" style="left:162.20px;top:395.30px;width:55.15px;height:11.50px;background:#f6d197;border-radius:1.8px"></div>
<div class="t" style="left:166.00px;top:391px;font-size:8.2px;line-height:20px;color:#5a462b;-webkit-text-stroke:0.12px #5a462b;">Melanie Cole</div>
<svg class="a" style="left:243.70px;top:399.90px;" width="7" height="4.5" viewBox="0 0 7 4.5"><path d="M0.7 0.7l2.8 2.8 2.8-2.8" fill="none" stroke="#a3a3a3" stroke-width="1.3"/></svg>
<div class="t" style="left:260.60px;top:390px;font-size:8.9px;line-height:20px;color:#444;">01/05/2025 22:51</div>
<div class="t" style="left:358.90px;top:390px;font-size:8.9px;line-height:20px;color:#444;">01/06/2025 04:46</div>
<div class="a" style="left:29.00px;top:410.30px;width:448.50px;height:1.10px;background:#e6e6e6"></div>
<div class="t" style="left:40.76px;top:412px;font-size:6.2px;line-height:20px;color:#6a6a6a;-webkit-text-stroke:0.1px #6a6a6a;">15</div>
<div class="t" style="left:64.00px;top:410px;font-size:8.9px;line-height:20px;color:#444;">34</div>
<svg class="a" style="left:145.00px;top:417.60px;" width="7.5" height="7.5" viewBox="0 0 16 16"><path d="M9.5 1.5h5v5M14.5 1.5L8 8M12.5 9.5v5h-11v-11h5" fill="none" stroke="#8c8c8c" stroke-width="1.7"/></svg>
<div class="a" style="left:162.20px;top:415.00px;width:61.09px;height:11.50px;background:#f6d197;border-radius:1.8px"></div>
<div class="t" style="left:166.00px;top:411px;font-size:8.2px;line-height:20px;color:#5a462b;-webkit-text-stroke:0.12px #5a462b;">Eric Rodriguez</div>
<svg class="a" style="left:243.70px;top:419.60px;" width="7" height="4.5" viewBox="0 0 7 4.5"><path d="M0.7 0.7l2.8 2.8 2.8-2.8" fill="none" stroke="#a3a3a3" stroke-width="1.3"/></svg>
<div class="t" style="left:260.60px;top:410px;font-size:8.9px;line-height:20px;color:#444;">01/06/2025 06:25</div>
<div class="t" style="left:358.90px;top:410px;font-size:8.9px;line-height:20px;color:#444;">01/06/2025 11:42</div>
<div class="a" style="left:29.00px;top:430.00px;width:448.50px;height:1.10px;background:#e6e6e6"></div>
<div class="t" style="left:40.76px;top:432px;font-size:6.2px;line-height:20px;color:#6a6a6a;-webkit-text-stroke:0.1px #6a6a6a;">16</div>
<div class="t" style="left:64.00px;top:430px;font-size:8.9px;line-height:20px;color:#444;">4</div>
<svg class="a" style="left:145.00px;top:437.30px;" width="7.5" height="7.5" viewBox="0 0 16 16"><path d="M9.5 1.5h5v5M14.5 1.5L8 8M12.5 9.5v5h-11v-11h5" fill="none" stroke="#8c8c8c" stroke-width="1.7"/></svg>
<div class="a" style="left:162.20px;top:434.70px;width:62.44px;height:11.50px;background:#f6d197;border-radius:1.8px"></div>
<div class="t" style="left:166.00px;top:431px;font-size:8.2px;line-height:20px;color:#5a462b;-webkit-text-stroke:0.12px #5a462b;">Edward Adams</div>
<svg class="a" style="left:243.70px;top:439.30px;" width="7" height="4.5" viewBox="0 0 7 4.5"><path d="M0.7 0.7l2.8 2.8 2.8-2.8" fill="none" stroke="#a3a3a3" stroke-width="1.3"/></svg>
<div class="t" style="left:260.60px;top:430px;font-size:8.9px;line-height:20px;color:#444;">01/06/2025 20:53</div>
<div class="t" style="left:358.90px;top:430px;font-size:8.9px;line-height:20px;color:#444;">01/07/2025 03:55</div>
<div class="a" style="left:29.00px;top:449.70px;width:448.50px;height:1.10px;background:#e6e6e6"></div>
<div class="t" style="left:40.76px;top:451px;font-size:6.2px;line-height:20px;color:#6a6a6a;-webkit-text-stroke:0.1px #6a6a6a;">17</div>
<div class="t" style="left:64.00px;top:449px;font-size:8.9px;line-height:20px;color:#444;">17</div>
<svg class="a" style="left:145.00px;top:457.00px;" width="7.5" height="7.5" viewBox="0 0 16 16"><path d="M9.5 1.5h5v5M14.5 1.5L8 8M12.5 9.5v5h-11v-11h5" fill="none" stroke="#8c8c8c" stroke-width="1.7"/></svg>
<div class="a" style="left:162.20px;top:454.40px;width:48.79px;height:11.50px;background:#f6d197;border-radius:1.8px"></div>
<div class="t" style="left:166.00px;top:450px;font-size:8.2px;line-height:20px;color:#5a462b;-webkit-text-stroke:0.12px #5a462b;">Kelli Turner</div>
<svg class="a" style="left:243.70px;top:459.00px;" width="7" height="4.5" viewBox="0 0 7 4.5"><path d="M0.7 0.7l2.8 2.8 2.8-2.8" fill="none" stroke="#a3a3a3" stroke-width="1.3"/></svg>
<div class="t" style="left:260.60px;top:449px;font-size:8.9px;line-height:20px;color:#444;">01/07/2025 00:46</div>
<div class="t" style="left:358.90px;top:449px;font-size:8.9px;line-height:20px;color:#444;">01/07/2025 08:33</div>
<div class="a" style="left:29.00px;top:469.40px;width:448.50px;height:1.10px;background:#e6e6e6"></div>
<div class="a" style="left:58.50px;top:135.10px;width:1.00px;height:329.90px;background:#e7e7e7"></div>
<div class="a" style="left:156.50px;top:135.10px;width:1.00px;height:329.90px;background:#e7e7e7"></div>
<div class="a" style="left:255.50px;top:135.10px;width:1.00px;height:329.90px;background:#e7e7e7"></div>
<div class="a" style="left:353.80px;top:135.10px;width:1.00px;height:329.90px;background:#e7e7e7"></div>
<div class="a" style="left:452.00px;top:135.10px;width:1.00px;height:329.90px;background:#e7e7e7"></div>
<div class="a" style="left:477.50px;top:114.00px;width:214.50px;height:351.00px;background:#f7f5f1"></div>
<div class="a" style="left:477.30px;top:114.00px;width:1.00px;height:351.00px;background:#dedcd8"></div>
<div class="a" style="left:688.20px;top:136.00px;width:3.80px;height:329.00px;background:#fafaf8"></div>
<div class="a" style="left:478.30px;top:114.00px;width:213.70px;height:21.00px;background:#fafaf9"></div>
<div class="a" style="left:478.30px;top:135.00px;width:213.70px;height:1.00px;background:#e8e4de"></div>
<div class="t" style="left:494.80px;top:114px;font-size:8.6px;line-height:20px;color:#3a3a3a;transform:scaleX(0.983);transform-origin:0 0;">Table</div>
<div class="t" style="left:543.40px;top:114px;font-size:8.6px;line-height:20px;color:#8c8c8c;transform:scaleX(0.992);transform-origin:0 0;">Column</div>
<div class="t" style="left:598.80px;top:114px;font-size:8.6px;line-height:20px;color:#8c8c8c;transform:scaleX(0.934);transform-origin:0 0;">Record</div>
<div class="t" style="left:657.70px;top:114px;font-size:8.6px;line-height:20px;color:#8c8c8c;transform:scaleX(0.991);transform-origin:0 0;">Cell</div>
<div class="a" style="left:478.00px;top:134.10px;width:54.00px;height:1.80px;background:#e2614f"></div>
<div class="a" style="left:480.30px;top:139.10px;width:208.70px;height:20.80px;background:#eee6da;border-radius:2px"></div>
<svg class="a" style="left:486.60px;top:147.50px;" width="6.4" height="4.4" viewBox="0 0 6.4 4.4"><path d="M0.7 0.7l2.5 2.6 2.5-2.6" fill="none" stroke="#2e2e2e" stroke-width="1.4"/></svg>
<div class="t" style="left:495.90px;top:140px;font-size:9.6px;line-height:20px;color:#2f2f2f;font-weight:bold;transform:scaleX(0.863);transform-origin:0 0;">Table Properties</div>
<svg class="a" style="left:675.30px;top:144.20px;" width="9" height="8.8" viewBox="0 0 8 10"><ellipse cx="4" cy="1.8" rx="3.8" ry="1.7" fill="#8d887f"/><path d="M0.2 3.1v2c0 .9 1.7 1.7 3.8 1.7s3.8-.8 3.8-1.7v-2c-.8.7-2.2 1.1-3.8 1.1S1 3.8.2 3.1zM0.2 6.2v2c0 .9 1.7 1.7 3.8 1.7s3.8-.8 3.8-1.7v-2c-.8.7-2.2 1.1-3.8 1.1S1 6.9.2 6.2z" fill="#8d887f"/></svg>
<div class="t" style="left:488.40px;top:162px;font-size:8.6px;line-height:20px;color:#4a4a4a;transform:scaleX(0.970);transform-origin:0 0;">Table Name</div>
<div class="a" style="left:487.70px;top:180.70px;width:194.00px;height:17.60px;background:#fff;border:1px solid #dcdad6;border-radius:2px"></div>
<div class="t" style="left:492.90px;top:179px;font-size:8.6px;line-height:20px;color:#333;transform:scaleX(0.970);transform-origin:0 0;">Timesheets</div>
<div class="t" style="left:488.40px;top:202px;font-size:8.6px;line-height:20px;color:#4a4a4a;transform:scaleX(0.995);transform-origin:0 0;">Table Description</div>
<div class="a" style="left:487.70px;top:219.80px;width:194.00px;height:29.70px;background:#fff;border:1px solid #dcdad6;border-radius:2px"></div>
<svg class="a" style="left:676.00px;top:243.50px;" width="5" height="5" viewBox="0 0 5 5"><path d="M4.5 1L1 4.5M4.5 3L3 4.5" stroke="#8a8a8a" stroke-width="0.7"/></svg>
<div class="a" style="left:487.50px;top:258.50px;width:79.80px;height:16.70px;background:#edeeee;border:1px solid #d6d6d6;border-radius:3px"></div>
<svg class="a" style="left:492.20px;top:263.00px;" width="7" height="7.5" viewBox="0 0 7 7.5"><path d="M3.5 0L7 1.3v2.4c0 1.9-1.5 3.2-3.5 3.8C1.5 6.9 0 5.6 0 3.7V1.3z" fill="#222"/><circle cx="3.5" cy="3.4" r="1" fill="#edeeee"/></svg>
<div class="t" style="left:501.60px;top:257px;font-size:8.6px;line-height:20px;color:#454545;transform:scaleX(0.875);transform-origin:0 0;">Table Permissions</div>
<div class="a" style="left:480.30px;top:285.90px;width:208.70px;height:20.80px;background:#eee6da;border-radius:2px"></div>
<svg class="a" style="left:486.60px;top:294.30px;" width="6.4" height="4.4" viewBox="0 0 6.4 4.4"><path d="M0.7 0.7l2.5 2.6 2.5-2.6" fill="none" stroke="#2e2e2e" stroke-width="1.4"/></svg>
<div class="t" style="left:495.90px;top:287px;font-size:9.6px;line-height:20px;color:#2f2f2f;font-weight:bold;transform:scaleX(0.844);transform-origin:0 0;">Relationships</div>
<svg class="a" style="left:675.30px;top:291.00px;" width="9" height="8.8" viewBox="0 0 8 10"><ellipse cx="4" cy="1.8" rx="3.8" ry="1.7" fill="#8d887f"/><path d="M0.2 3.1v2c0 .9 1.7 1.7 3.8 1.7s3.8-.8 3.8-1.7v-2c-.8.7-2.2 1.1-3.8 1.1S1 3.8.2 3.1zM0.2 6.2v2c0 .9 1.7 1.7 3.8 1.7s3.8-.8 3.8-1.7v-2c-.8.7-2.2 1.1-3.8 1.1S1 6.9.2 6.2z" fill="#8d887f"/></svg>
<div class="a" style="left:551.00px;top:288.70px;width:7.60px;height:7.60px;background:#c4bfb8;border-radius:50%"></div>
<svg class="a" style="left:553.20px;top:290.20px;" width="3.2" height="4.6" viewBox="0 0 3.2 4.6"><path d="M0.5 1.3a1.1 1.1 0 1 1 1.6 1L1.6 2.8v0.5" fill="none" stroke="#ece9e4" stroke-width="0.8"/><circle cx="1.6" cy="4.1" r="0.45" fill="#ece9e4"/></svg>
<svg class="a" style="left:488.20px;top:316.60px;" width="7.6" height="5.4" viewBox="0 0 7.6 5.4"><path d="M0 2.7h6.6M4.4 0.5l2.3 2.2-2.3 2.2" fill="none" stroke="#2a2a2a" stroke-width="1.4"/></svg>
<div class="t" style="left:498.60px;top:311px;font-size:9.9px;line-height:20px;color:#3a3a3a;transform:scaleX(0.854);transform-origin:0 0;">References <b>From</b> This Table</div>
<div class="a" style="left:605.80px;top:312.60px;width:7.60px;height:7.60px;background:#c4bfb8;border-radius:50%"></div>
<svg class="a" style="left:608.00px;top:314.10px;" width="3.2" height="4.6" viewBox="0 0 3.2 4.6"><path d="M0.5 1.3a1.1 1.1 0 1 1 1.6 1L1.6 2.8v0.5" fill="none" stroke="#ece9e4" stroke-width="0.8"/><circle cx="1.6" cy="4.1" r="0.45" fill="#ece9e4"/></svg>
<div class="a" style="left:487.70px;top:329.70px;width:194.00px;height:31.30px;background:#fff;border-radius:2px"></div>
<div class="a" style="left:487.70px;top:329.70px;width:1.30px;height:31.30px;background:#efc66e"></div>
<svg class="a" style="left:495.00px;top:335.50px;" width="9" height="6.8" viewBox="0 0 9 6.8"><rect x="0.5" y="0.5" width="8" height="5.8" fill="none" stroke="#555" stroke-width="1"/><path d="M0.5 2.4h8M0.5 4.3h8M3.2 2.4v4M5.8 2.4v4" stroke="#555" stroke-width="0.8"/></svg>
<div class="t" style="left:505.20px;top:330px;font-size:10.0px;line-height:20px;color:#333;transform:scaleX(0.841);transform-origin:0 0;">Employees</div>
<div class="t" style="left:495.00px;top:343px;font-size:7.3px;line-height:20px;color:#7b7b7b;transform:scaleX(0.977);transform-origin:0 0;">Referenced via</div>
<svg class="a" style="left:543.90px;top:350.10px;" width="7.5" height="5.4" viewBox="0 0 9 6.8"><rect x="0.5" y="0.5" width="8" height="5.8" fill="none" stroke="#777" stroke-width="1"/><path d="M0.5 2.4h8M0.5 4.3h8M3.2 2.4v4M5.8 2.4v4" stroke="#777" stroke-width="0.8"/></svg>
<div class="t" style="left:553.00px;top:343px;font-size:7.4px;line-height:20px;color:#7b7b7b;transform:scaleX(0.985);transform-origin:0 0;">Timesheets</div>
<svg class="a" style="left:595.00px;top:350.60px;" width="3.5" height="4.4" viewBox="0 0 3.5 4.4"><path d="M0 0l3.5 2.2L0 4.4z" fill="#666"/></svg>
<svg class="a" style="left:602.20px;top:350.20px;" width="7.125" height="5.225" viewBox="0 0 7.5 5.5"><path d="M3.4 1.2L4.1 0.6a1.5 1.5 0 0 1 2.3 2L5.3 3.6M4.1 4.3L3.4 4.9a1.5 1.5 0 0 1-2.3-2L2.2 1.9M2.7 3.6L4.8 1.9" fill="none" stroke="#777" stroke-width="1.25"/></svg>
<div class="t" style="left:610.50px;top:343px;font-size:7.4px;line-height:20px;color:#7b7b7b;transform:scaleX(0.987);transform-origin:0 0;">employee_id</div>
<div class="a" style="left:487.50px;top:370.30px;width:85.00px;height:17.70px;background:#edeeee;border:1px solid #d6d6d6;border-radius:3px"></div>
<svg class="a" style="left:492.60px;top:375.60px;" width="6.4" height="6.4" viewBox="0 0 6.4 6.4"><path d="M3.2 0v6.4M0 3.2h6.4" stroke="#222" stroke-width="1.3"/></svg>
<div class="t" style="left:501.40px;top:370px;font-size:9.9px;line-height:20px;color:#454545;transform:scaleX(0.762);transform-origin:0 0;">Create Relationship</div>
<div class="a" style="left:480.30px;top:398.20px;width:208.70px;height:20.80px;background:#eee6da;border-radius:2px"></div>
<svg class="a" style="left:487.80px;top:405.80px;" width="4.4" height="6.2" viewBox="0 0 4.4 6.2"><path d="M0.7 0.6l2.6 2.5-2.6 2.5" fill="none" stroke="#2e2e2e" stroke-width="1.4"/></svg>
<div class="t" style="left:495.90px;top:399px;font-size:9.6px;line-height:20px;color:#2f2f2f;font-weight:bold;transform:scaleX(0.840);transform-origin:0 0;">Record Summary</div>
<div class="a" style="left:480.30px;top:422.00px;width:208.70px;height:20.80px;background:#eee6da;border-radius:2px"></div>
<svg class="a" style="left:486.60px;top:430.40px;" width="6.4" height="4.4" viewBox="0 0 6.4 4.4"><path d="M0.7 0.7l2.5 2.6 2.5-2.6" fill="none" stroke="#2e2e2e" stroke-width="1.4"/></svg>
<div class="t" style="left:495.90px;top:423px;font-size:9.6px;line-height:20px;color:#2f2f2f;font-weight:bold;transform:scaleX(0.819);transform-origin:0 0;">Actions</div>
<div class="a" style="left:487.70px;top:450.60px;width:194.00px;height:19.40px;background:#fff;border:1px solid #dddbd7;border-radius:2px"></div>
<svg class="a" style="left:491.40px;top:455.30px;" width="8.8" height="8.8" viewBox="0 0 8.8 8.8"><circle cx="4.4" cy="4.4" r="3.7" fill="none" stroke="#3a3a3a" stroke-width="1"/><path d="M6.2 2.6L5.1 5.1 2.6 6.2 3.7 3.7z" fill="#3a3a3a"/></svg>
<div class="t" style="left:502.50px;top:450px;font-size:9.3px;line-height:20px;color:#3a3a3a;transform:scaleX(0.901);transform-origin:0 0;">Explore Data</div>
<div class="a" style="left:553.60px;top:452.60px;width:7.60px;height:7.60px;background:#c4bfb8;border-radius:50%"></div>
<svg class="a" style="left:555.80px;top:454.10px;" width="3.2" height="4.6" viewBox="0 0 3.2 4.6"><path d="M0.5 1.3a1.1 1.1 0 1 1 1.6 1L1.6 2.8v0.5" fill="none" stroke="#ece9e4" stroke-width="0.8"/><circle cx="1.6" cy="4.1" r="0.45" fill="#ece9e4"/></svg>
<svg class="a" style="left:669.20px;top:455.30px;" width="8" height="8" viewBox="0 0 16 16"><path d="M9.5 1.5h5v5M14.5 1.5L8 8M12.5 9.5v5h-11v-11h5" fill="none" stroke="#222" stroke-width="2.2"/></svg>
<div class="a" style="left:29.00px;top:114.20px;width:663.00px;height:1.00px;background:#dadada"></div>
<div class="a" style="left:29.00px;top:464.60px;width:663.00px;height:24.10px;background:#eeeeee;border-top:1px solid #e2e2e2"></div>
<div class="a" style="left:32.00px;top:468.70px;width:65.20px;height:18.60px;background:#e4483b;border-radius:2.5px"></div>
<svg class="a" style="left:37.30px;top:474.00px;" width="5.4" height="5.4" viewBox="0 0 5.4 5.4"><path d="M2.7 0v5.4M0 2.7h5.4" stroke="#fde6e2" stroke-width="1.3"/></svg>
<div class="t" style="left:46.60px;top:467px;font-size:8.9px;line-height:20px;color:#fcdcd7;transform:scaleX(0.952);transform-origin:0 0;">New Record</div>
<div class="t" style="left:105.70px;top:467px;font-size:9.1px;line-height:20px;color:#454545;transform:scaleX(0.940);transform-origin:0 0;">Showing 1-50 of 50 records</div>
<div class="a" style="left:583.00px;top:468.40px;width:13.00px;height:18.80px;background:#f3efee;border:1px solid #e8a29b;border-radius:2px"></div>
<div class="t" style="left:588.20px;top:467px;font-size:8.6px;line-height:20px;color:#e06a5f;-webkit-text-stroke:0.3px #e06a5f;transform:scaleX(0.796);transform-origin:0 0;">1</div>
<div class="a" style="left:598.50px;top:469.60px;width:32.80px;height:16.20px;background:#f1f1f1;border:1px solid #d8d8d8;border-radius:3px;box-shadow:0 1px 0 rgba(0,0,0,.05)"></div>
<div class="t" style="left:602.20px;top:467px;font-size:8.8px;line-height:20px;color:#3e3e3e;transform:scaleX(1.034);transform-origin:0 0;">500</div>
<svg class="a" style="left:621.20px;top:476.40px;" width="4.4" height="2.8" viewBox="0 0 4.4 2.8"><path d="M0.5 0.5l1.7 1.7 1.7-1.7" fill="none" stroke="#333" stroke-width="1.2"/></svg>
<div class="a" style="left:640.20px;top:468.70px;width:49.40px;height:18.50px;background:#f1f1f1;border:1px solid #d8d8d8;border-radius:3px;box-shadow:0 1px 0 rgba(0,0,0,.05)"></div>
<svg class="a" style="left:644.70px;top:473.70px;" width="8" height="7.2" viewBox="0 0 8 7.2"><path d="M6.9 2.8A3.1 3.1 0 0 0 1.3 2M1.1 4.4a3.1 3.1 0 0 0 5.6.8" fill="none" stroke="#1e1e1e" stroke-width="1.4"/><path d="M7.8 0v3.2H4.6zM0.2 7.2V4H3.4z" fill="#1e1e1e"/></svg>
<div class="t" style="left:656.00px;top:467px;font-size:9.4px;line-height:20px;color:#3e3e3e;transform:scaleX(0.884);transform-origin:0 0;">Refresh</div>
</body></html>
